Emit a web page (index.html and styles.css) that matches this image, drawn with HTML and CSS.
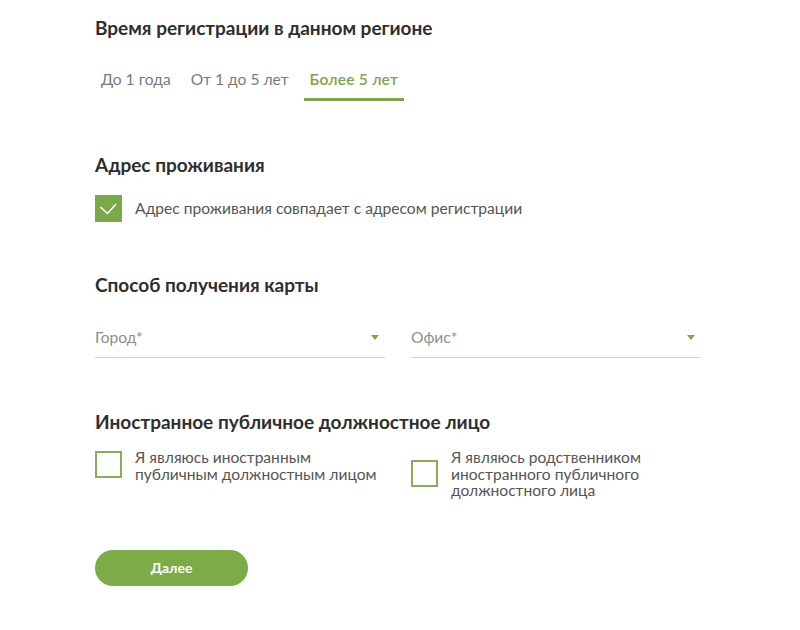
FILE: index.html
```html
<!DOCTYPE html>
<html lang="ru">
<head>
<meta charset="utf-8">
<link rel="stylesheet" href="styles.css">
</head>
<body>
<main class="form">
  <section class="section sec-time">
    <h2 class="title">Время регистрации в данном регионе</h2>
    <div class="tabs">
      <span class="tab">До 1 года</span>
      <span class="tab">От 1 до 5 лет</span>
      <span class="tab active">Более 5 лет</span>
    </div>
  </section>

  <section class="section sec-address">
    <h2 class="title">Адрес проживания</h2>
    <label class="check">
      <span class="box checked"><svg viewBox="0 0 27 27" width="27" height="27"><path d="M5.5 12l7 6.5 8.5-9.5" fill="none" stroke="#fff" stroke-width="1.5"/></svg></span>
      <span class="check-text">Адрес проживания совпадает с адресом регистрации</span>
    </label>
  </section>

  <section class="section sec-card">
    <h2 class="title">Способ получения карты</h2>
    <div class="selects">
      <div class="select"><span class="placeholder">Город*</span><span class="arrow"></span></div>
      <div class="select"><span class="placeholder">Офис*</span><span class="arrow"></span></div>
    </div>
  </section>

  <section class="section sec-pep">
    <h2 class="title">Иностранное публичное должностное лицо</h2>
    <div class="pep-row">
      <label class="check pep">
        <span class="box"></span>
        <span class="check-text">Я являюсь иностранным<br>публичным должностным лицом</span>
      </label>
      <label class="check pep">
        <span class="box"></span>
        <span class="check-text">Я являюсь родственником<br>иностранного публичного<br>должностного лица</span>
      </label>
    </div>
  </section>

  <button class="btn" type="button">Далее</button>
</main>
</body>
</html>
```

FILE: styles.css
```css
* { box-sizing: border-box; }
html, body { margin: 0; padding: 0; background: #fff; }
body {
  font-family: Lato, "Noto Sans", "DejaVu Sans", sans-serif;
  color: #333;
  width: 800px;
  height: 630px;
  overflow: hidden;
}
.form {
  padding: 16px 0 0 95px;
  display: flex;
  flex-direction: column;
}
.title {
  margin: 0;
  font-size: 19px;
  font-weight: 700;
  color: #2e2e2e;
  line-height: 24px;
}
.tabs {
  display: flex;
  margin-top: 23px;
}
.tab {
  font-size: 15.6px;
  line-height: 18px;
  color: #7a7a7a;
  padding: 7px 6px 10px;
  margin-right: 9px;
  border-bottom: 3px solid transparent;
}
.tab:first-child { margin-right: 8px; }
.tab.active {
  color: #7ba64d;
  font-weight: 600;
  letter-spacing: 0.2px;
  border-bottom-color: #7ba64d;
}
.sec-address { margin-top: 52px; }
.check {
  display: flex;
  align-items: center;
  gap: 13px;
  margin-top: 18px;
}
.box {
  width: 27px;
  height: 27px;
  border: 2px solid #86ad5e;
  background: #fff;
  flex: none;
  display: flex;
}
.box.checked {
  border: none;
  background: #7aa84a;
}
.check-text {
  font-size: 15.6px;
  color: #555;
  line-height: 16.5px;
}
.sec-card { margin-top: 51px; }
.selects {
  display: flex;
  gap: 26px;
  margin-top: 15px;
}
.select {
  width: 290px;
  height: 46px;
  border-bottom: 1px solid #cfcfcf;
  display: flex;
  align-items: center;
  justify-content: space-between;
  padding: 4px 6px 0 0;
}
.placeholder {
  font-size: 15.6px;
  color: #8f8f8f;
}
.arrow {
  width: 0;
  height: 0;
  border-left: 4px solid transparent;
  border-right: 4px solid transparent;
  border-top: 5px solid #7ba64d;
  margin-top: 2px;
}
.sec-pep { margin-top: 52px; }
.pep-row {
  display: flex;
  margin-top: 7px;
}
.pep {
  width: 316px;
  align-items: center;
  margin-top: 8px;
}
.pep:first-child { align-items: flex-start; }
.pep:first-child .box { margin-top: 2px; }
.btn {
  margin-top: 51px;
  width: 153px;
  height: 36px;
  border: none;
  border-radius: 18px;
  background: #7cab48;
  color: #fff;
  font-family: Lato, "Noto Sans", sans-serif;
  font-weight: 700;
  font-size: 14px;
  padding: 0;
}
```
